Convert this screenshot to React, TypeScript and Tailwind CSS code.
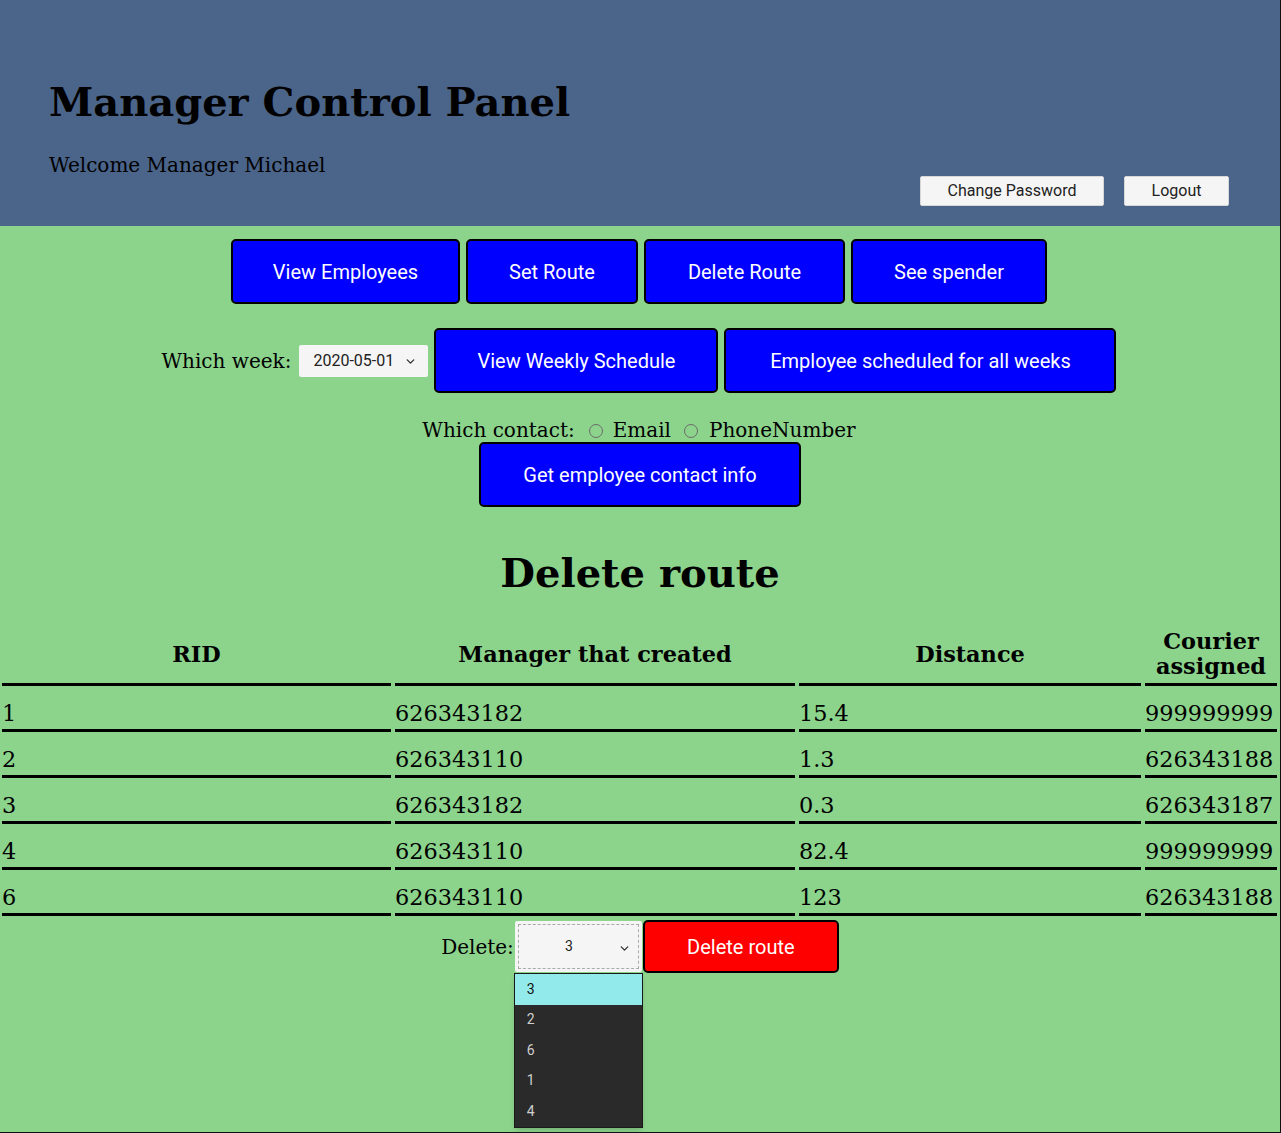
import { ChevronDown } from "lucide-react";

const serif = "font-['DejaVu_Serif',serif]";
const sans = "font-['Roboto',sans-serif]";

const routes = [
  { rid: "1", manager: "626343182", distance: "15.4", courier: "999999999" },
  { rid: "2", manager: "626343110", distance: "1.3", courier: "626343188" },
  { rid: "3", manager: "626343182", distance: "0.3", courier: "626343187" },
  { rid: "4", manager: "626343110", distance: "82.4", courier: "999999999" },
  { rid: "6", manager: "626343110", distance: "123", courier: "626343188" },
];

const BlueButton = ({ label, width }: { label: string; width: string }) => (
  <button
    className={`${width} h-[65px] bg-[#0000ff] text-white text-[20px] ${sans} border-2 border-black rounded-[5px]`}
  >
    {label}
  </button>
);

const LightButton = ({ label, width }: { label: string; width: string }) => (
  <button
    className={`${width} h-[30px] bg-[#f5f5f5] text-[#222] text-[16px] ${sans} border border-[#d8d8d8] rounded-[2px]`}
  >
    {label}
  </button>
);

const Radio = () => (
  <span className="inline-block w-[14px] h-[14px] rounded-full border border-[#6b6b6b] bg-[#8cd38c]" />
);

const thCls =
  "border-b-[3px] border-black text-[22.4px] leading-[25px] font-bold pt-[16px] pb-[4px] align-middle";
const tdCls = "border-b-[3px] border-black pt-[14px] pb-[3px] px-0";

const App = () => {
  return (
    <div
      className={`w-[1281px] h-[1133px] bg-[#8cd38c] border-r border-b border-[#111] overflow-hidden ${serif} text-black`}
    >
      {/* header */}
      <header className="h-[226px] bg-[#4b6489] flex justify-between items-end pb-[20px] pr-[51px]">
        <div className="self-start pl-[49px] pt-[78px]">
          <h1 className="text-[40px] leading-[47px] font-bold">Manager Control Panel</h1>
          <p className="text-[20px] leading-[23px] mt-[29px]">Welcome Manager Michael</p>
        </div>
        <div className="flex gap-[20px]">
          <LightButton label="Change Password" width="w-[184px]" />
          <LightButton label="Logout" width="w-[105px]" />
        </div>
      </header>

      {/* nav */}
      <div className="flex justify-center gap-[6px] mt-[13px] pr-[2px]">
        <BlueButton label="View Employees" width="w-[229px]" />
        <BlueButton label="Set Route" width="w-[172px]" />
        <BlueButton label="Delete Route" width="w-[201px]" />
        <BlueButton label="See spender" width="w-[196px]" />
      </div>

      <div className="flex justify-center items-center mt-[24px] pr-[2px]">
        <span className="text-[20px] mr-[8px]">Which week:</span>
        <div className="relative w-[129px] h-[32px] bg-[#f5f5f5] rounded-[2px] flex items-center mr-[6px]">
          <span className={`${sans} text-[16px] text-[#222] pl-[14px]`}>2020-05-01</span>
          <ChevronDown className="absolute right-[11px] top-[10px] w-[13px] h-[13px] text-[#333]" strokeWidth={2.5} />
        </div>
        <div className="flex gap-[6px]">
          <BlueButton label="View Weekly Schedule" width="w-[284px]" />
          <BlueButton label="Employee scheduled for all weeks" width="w-[392px]" />
        </div>
      </div>

      <div className="flex justify-center items-center text-[20px] leading-[23px] mt-[26px] pr-[2px]">
        <span>Which contact:</span>
        <span className="ml-[14px] mr-[10px] flex"><Radio /></span>
        <span>Email</span>
        <span className="ml-[13px] mr-[11px] flex"><Radio /></span>
        <span>PhoneNumber</span>
      </div>
      <div className="flex justify-center">
        <BlueButton label="Get employee contact info" width="w-[322px]" />
      </div>

      <h2 className="text-[40px] leading-[47px] font-bold text-center mt-[42px]">Delete route</h2>

      <table className="mt-[17px] ml-[-2px] w-[1283px] border-separate border-spacing-x-[4px] border-spacing-y-0 table-fixed">
        <thead>
          <tr>
            <th className={`w-[389px] ${thCls}`}>RID</th>
            <th className={`w-[400px] ${thCls}`}>Manager that created</th>
            <th className={`w-[342px] ${thCls}`}>Distance</th>
            <th className={`w-[132px] ${thCls}`}>Courier assigned</th>
          </tr>
        </thead>
        <tbody>
          {routes.map((r) => (
            <tr key={r.rid} className="text-[22.4px] leading-[26px]">
              <td className={tdCls}>{r.rid}</td>
              <td className={tdCls}>{r.manager}</td>
              <td className={tdCls}>{r.distance}</td>
              <td className={tdCls}>{r.courier}</td>
            </tr>
          ))}
        </tbody>
      </table>

      {/* delete form */}
      <div className="flex justify-center items-center mt-[4px]">
        <span className="text-[20px] mr-[1px]">Delete:</span>
        <div className="relative">
          <div className="w-[127px] h-[51px] bg-[#f5f5f5] rounded-[2px] p-[3px]">
            <div className="w-full h-full border border-dashed border-[#aaa] flex items-center relative">
              <span className={`${sans} text-[14px] text-[#222] w-full text-center pr-[19px]`}>3</span>
              <ChevronDown className="absolute right-[7px] top-[17px] w-[13px] h-[13px] text-[#333]" strokeWidth={2.5} />
            </div>
          </div>
          <ul className={`absolute left-[-1px] top-[52px] w-[129px] bg-[#2a2a2a] border border-[#1a1a1a] ${sans} text-[14px] shadow-md`}>
            {["3", "2", "6", "1", "4"].map((v, i) => (
              <li
                key={v}
                className={`h-[30.5px] flex items-center pl-[12px] ${i === 0 ? "bg-[#93eaeb] text-[#111]" : "text-[#cfcfcf]"}`}
              >
                {v}
              </li>
            ))}
          </ul>
        </div>
        <button
          className={`ml-[1px] w-[196px] h-[53px] bg-[#ff0000] text-white text-[20px] ${sans} border-2 border-black rounded-[5px]`}
        >
          Delete route
        </button>
      </div>
    </div>
  );
};

export default App;
